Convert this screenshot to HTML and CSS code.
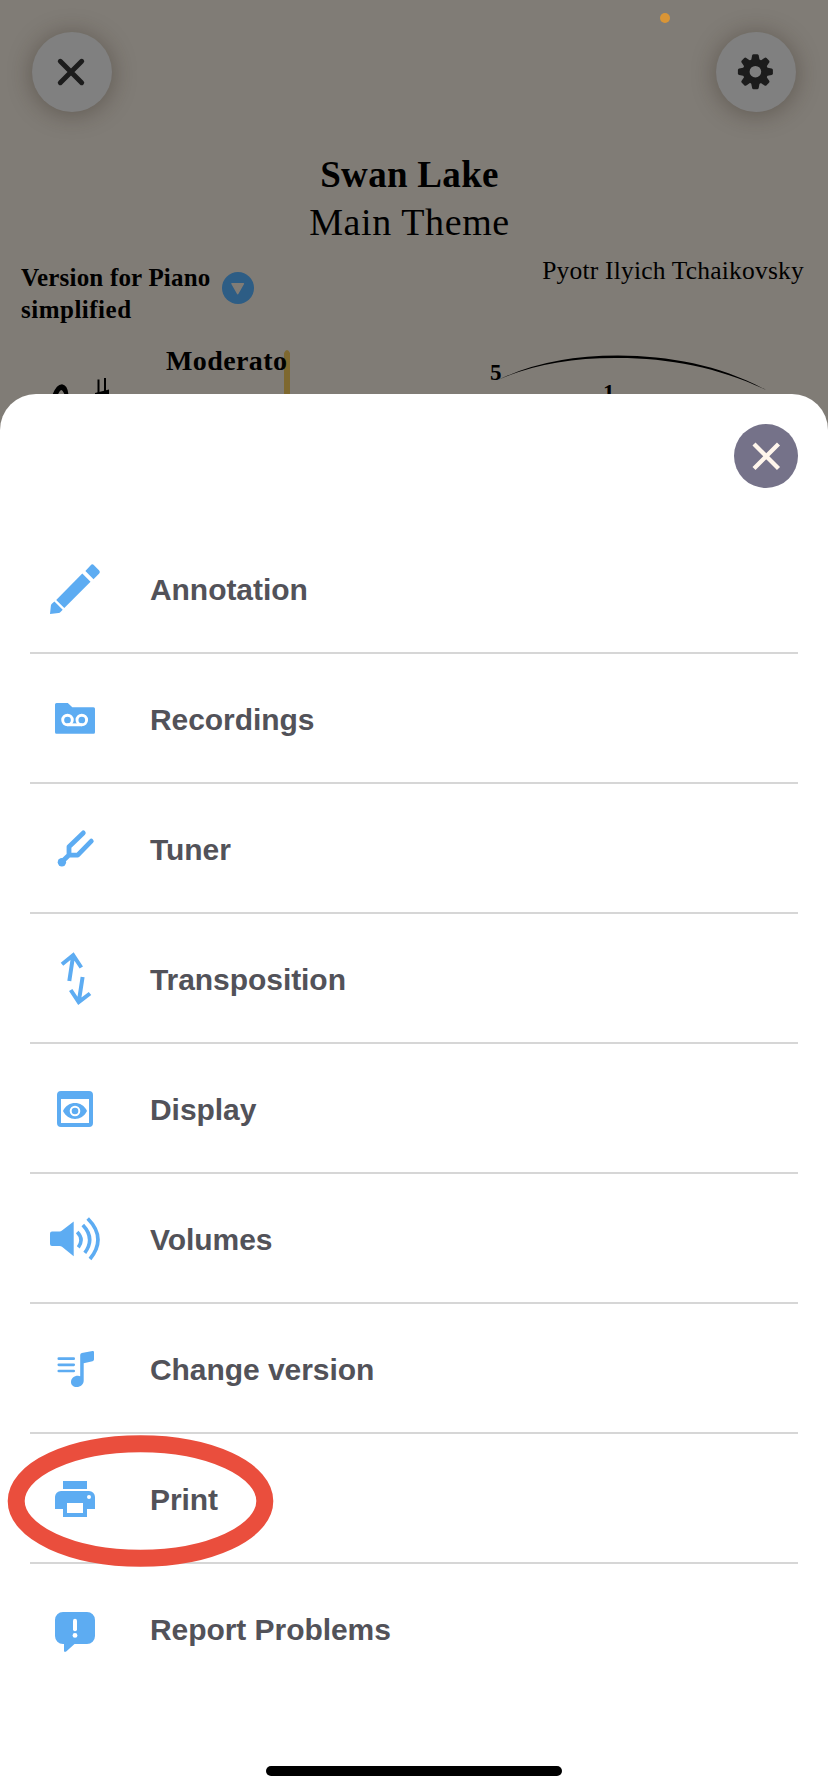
FILE: index.html
```html
<!DOCTYPE html>
<html lang="en">
<head>
<meta charset="utf-8">
<title>Swan Lake</title>
<link rel="stylesheet" href="styles.css">
</head>
<body>
<main class="screen">
  <header class="score">
    <span class="mic-dot"></span>
    <div class="toolbar">
      <button class="round" aria-label="Close score"><svg width="80" height="80" viewBox="0 0 80 80"><path d="M28.3 29.3 49.7 50.7M49.7 29.3 28.3 50.7" fill="none" stroke="#1c1c1c" stroke-width="5" stroke-linecap="round"/></svg></button>
      <button class="round" aria-label="Settings"><svg width="80" height="80" viewBox="0 0 80 80"><g transform="translate(39.4 39.7)"><g fill="#1c1c1c"><circle r="12.600"/><g id="teeth"><path id="tooth" d="M-4.300-11-3.300-16.200Q-3-17.500-1.700-17.500H1.700Q3-17.500 3.300-16.200L4.300-11V11L3.300 16.200Q3 17.500 1.700 17.500H-1.700Q-3 17.500-3.300 16.200L-4.300 11Z"/><use href="#tooth" transform="rotate(90)"/></g><use href="#teeth" transform="rotate(45)"/></g><circle r="5.800" fill="#808080"/></g></svg></button>
    </div>
    <h1 class="title">Swan Lake</h1>
    <h2 class="subtitle">Main Theme</h2>
    <div class="credits">
      <div class="version"><p>Version for Piano<br><span class="level">simplified</span></p>
        <svg width="32" height="32" viewBox="0 0 32 32"><circle cx="16" cy="16" r="16" fill="#2d5d85"/><path d="M10 11.7H21.4L15.7 21.7Z" fill="#807c76" stroke="#807c76" stroke-width="1.5" stroke-linejoin="round"/></svg>
      </div>
      <p class="composer">Pyotr Ilyich Tchaikovsky</p>
    </div>
    <svg class="staff" width="828" height="54" viewBox="0 340 828 54">
      <path d="M284 394V353Q287 347 290 353V394Z" fill="#7e682f"/>
      <text x="166" y="369.7" class="tempo">Moderato</text>
      <path d="M52 396Q56 384.500 62 384.200Q68 385 68.500 396H65Q63 390 61 390Q59 391 57.500 396Z"/>
      <path d="M98.500 379.500V396M105 378V396" stroke="#000" stroke-width="2"/><path d="M95 393 109 389.500V394.500L95 397Z"/>
      <text x="490" y="380" class="finger">5</text>
      <text x="603" y="400" class="finger">1</text>
      <path d="M498 380Q548 355.500 618 355.500C670 356 720 365 766 390C720 368 670 358 618 358Q548 357.500 498 380Z"/>
    </svg>
  </header>

  <section class="sheet">
    <button class="dismiss" aria-label="Close menu"><svg width="64" height="64" viewBox="0 0 64 64"><path d="M20 20 44.500 44.500M44.500 20 20 44.500" stroke="#fff6ec" stroke-width="4.300"/></svg></button>
    <ul class="menu">
      <li class="item"><svg class="icon" viewBox="0 0 60 60"><path d="M45.700 7.200Q47.300 5.500 49 7.200L54.200 12.400Q55.600 14 54.200 15.400L48.500 21.200 40.400 13.100ZM37.300 15.500 45.500 23.800 19.300 50 11.200 41.900ZM9.400 43.500 17.700 51.700 15.500 54Q14.800 54.900 13.600 55L5 56 5.900 47.500Q6 46.700 6.600 46.100Z"/></svg><span class="label">Annotation</span></li>
      <li class="item"><svg class="icon" viewBox="0 0 60 60"><path d="M11.500 15H22.800L27.300 19.300H48.500Q50 19.300 50 20.800V44.200Q50 45.700 48.500 45.700H11.500Q10 45.700 10 44.200V16.500Q10 15 11.500 15Z"/><g fill="none" stroke="#fff" stroke-width="2.900"><circle cx="22.500" cy="32" r="4.800"/><circle cx="36.800" cy="32" r="4.800"/><path d="M22.500 36.800H36.800"/></g></svg><span class="label">Recordings</span></li>
      <li class="item"><svg class="icon" viewBox="0 0 60 60"><path d="M38.300 14.900 24 28.700V37.100H32.700L46.300 23.100M24 37 16.700 44" class="line" stroke-width="4.800" stroke-linecap="round" stroke-linejoin="round"/><circle cx="16.900" cy="44.200" r="4.200"/></svg><span class="label">Tuner</span></li>
      <li class="item"><svg class="icon" viewBox="0 0 60 60"><path d="M17 16.300 28.200 7.200 36.300 19.500M28.200 7.200 24.300 33M25.700 42 33.700 54.200 45 45.500M33.700 54.200 37.600 29" class="line" stroke-width="4"/></svg><span class="label">Transposition</span></li>
      <li class="item"><svg class="icon" viewBox="0 0 60 60"><path fill-rule="evenodd" d="M16 13H44A4 4 0 0 1 48 17V45A4 4 0 0 1 44 49H16A4 4 0 0 1 12 45V17A4 4 0 0 1 16 13ZM16 21V45H44V21Z"/><path d="M18 33C23 22.400 37 22.400 42 33C37 43.600 23 43.600 18 33Z"/><circle cx="30" cy="33" r="4.300" fill="none" stroke="#fff" stroke-width="2"/></svg><span class="label">Display</span></li>
      <li class="item"><svg class="icon" viewBox="0 0 60 60"><path d="M7 23.500H14.500Q16 23.400 17 22.600L28.700 13.500V48.300L17 38.800Q16 38 14.500 37.900H7Q5 37.900 5 35.900V25.500Q5 23.500 7 23.500Z"/><path d="M32.200 24Q39.300 31.300 33.300 39.300M37.800 17Q50.500 30.500 39.800 44.800M42.700 10.500Q62 30 45 51" class="line" stroke-width="3.600"/></svg><span class="label">Volumes</span></li>
      <li class="item"><svg class="icon" viewBox="0 0 60 60"><path d="M13.800 20.700H28.700M13.800 26.800H28.700M13.800 33H28.700" class="line" stroke-width="2.700" stroke-linecap="round"/><path d="M35.200 17Q35.200 15.500 36.800 15.100L47.500 13Q49 12.700 49 14.200V21.500Q49 22.900 47.500 23.200L38.700 25.200V42.500C38.700 46.500 35.500 49 31.700 49C28.300 49 26 46.800 26 44.200C26 40.500 29 37.800 33 37.800Q34.200 37.800 35.200 38.200Z"/></svg><span class="label">Change version</span></li>
      <li class="item"><svg class="icon" viewBox="0 0 60 60"><path fill-rule="evenodd" d="M18 13H42V21H18ZM16 23H44A6 6 0 0 1 50 29V41H42V49H18V41H10V29A6 6 0 0 1 16 23ZM22 35V45H38V35Z"/><circle cx="44" cy="29" r="2" fill="#fff"/></svg><span class="label">Print</span>
        <svg class="highlight" width="267" height="134" viewBox="0 0 267 134"><ellipse cx="133.500" cy="67" rx="124.300" ry="57.200" fill="none" stroke="#ea4e3d" stroke-width="17"/></svg>
      </li>
      <li class="item"><svg class="icon" viewBox="0 0 60 60"><path d="M18 14H42A8 8 0 0 1 50 22V38A8 8 0 0 1 42 46H29.500L21.500 53.300Q19 55 19 52.500V46H18A8 8 0 0 1 10 38V22A8 8 0 0 1 18 14Z"/><path d="M30 22.700V31.300" fill="none" stroke="#fff" stroke-width="4" stroke-linecap="round"/><circle cx="30" cy="37.400" r="2.400" fill="#fff"/></svg><span class="label">Report Problems</span></li>
    </ul>
    <div class="home-bar"></div>
  </section>
</main>
</body>
</html>
```
FILE: styles.css
```css
* { box-sizing: border-box; }
body, h1, h2, p, ul { margin: 0; padding: 0; }
body { background: #807c76; }
svg { display: block; }
button { border: 0; padding: 0; border-radius: 50%; }

.screen {
  width: 828px;
  height: 1792px;
  display: flex;
  flex-direction: column;
  overflow: hidden;
}

.score {
  position: relative;
  height: 394px;
  display: flex;
  flex-direction: column;
  padding-top: 32px;
  color: #000;
  font-family: "Palatino Linotype", Palatino, "Liberation Serif", serif;
}
.mic-dot {
  position: absolute;
  left: 660px;
  top: 13px;
  width: 10px;
  height: 10px;
  border-radius: 50%;
  background: #d99536;
}
.toolbar { display: flex; justify-content: space-between; padding: 0 32px; }
.round {
  width: 80px;
  height: 80px;
  background: #808080;
  box-shadow: 0 2px 24px rgba(45, 35, 25, 0.4);
}
.title {
  margin-top: 39px;
  padding-right: 9px;
  text-align: center;
  font-size: 37px;
  line-height: 48px;
  letter-spacing: 0.3px;
}
.subtitle {
  margin-top: -1px;
  padding-right: 9px;
  text-align: center;
  font-size: 38px;
  line-height: 48px;
  font-weight: 400;
  letter-spacing: 0.6px;
}
.credits {
  height: 94px;
  display: flex;
  justify-content: space-between;
  align-items: flex-start;
  padding: 8px 24px 0 21px;
}
.version {
  display: flex;
  gap: 11px;
  padding-top: 8px;
  font-size: 25px;
  line-height: 32px;
  font-weight: 700;
  letter-spacing: 0.2px;
}
.version p { white-space: nowrap; }
.version svg { margin-top: 10px; }
.level { letter-spacing: 0.5px; }
.composer { padding-top: 1px; font-size: 25.500px; line-height: 32px; letter-spacing: 0.2px; }
.staff { flex: none; }
.tempo { font-size: 28px; font-weight: 700; letter-spacing: 0.4px; }
.finger { font-size: 23px; font-weight: 700; }

.sheet {
  flex: 1;
  display: flex;
  flex-direction: column;
  padding: 30px 30px 16px;
  border-radius: 36px 36px 0 0;
  background: #fff;
}
.dismiss {
  flex: none;
  align-self: flex-end;
  width: 64px;
  height: 64px;
  background: #757289;
}
.menu { margin-top: 36px; list-style: none; }
.item {
  position: relative;
  height: 130px;
  display: flex;
  align-items: center;
  gap: 45px;
  padding-left: 15px;
  border-bottom: 2px solid #d6d6d6;
  color: #525259;
  font: 700 30px/36px "Liberation Sans", Arial, sans-serif;
}
.item:last-child { border-bottom-color: transparent; }
.label { padding-top: 3px; letter-spacing: -0.06px; }
.icon { width: 60px; height: 60px; fill: #5dacf2; }
.line { fill: none; stroke: #5dacf2; }
.highlight { position: absolute; left: -23px; top: 0; }
.home-bar {
  align-self: center;
  width: 296px;
  height: 10px;
  margin-top: auto;
  border-radius: 5px;
  background: #000;
}
```
